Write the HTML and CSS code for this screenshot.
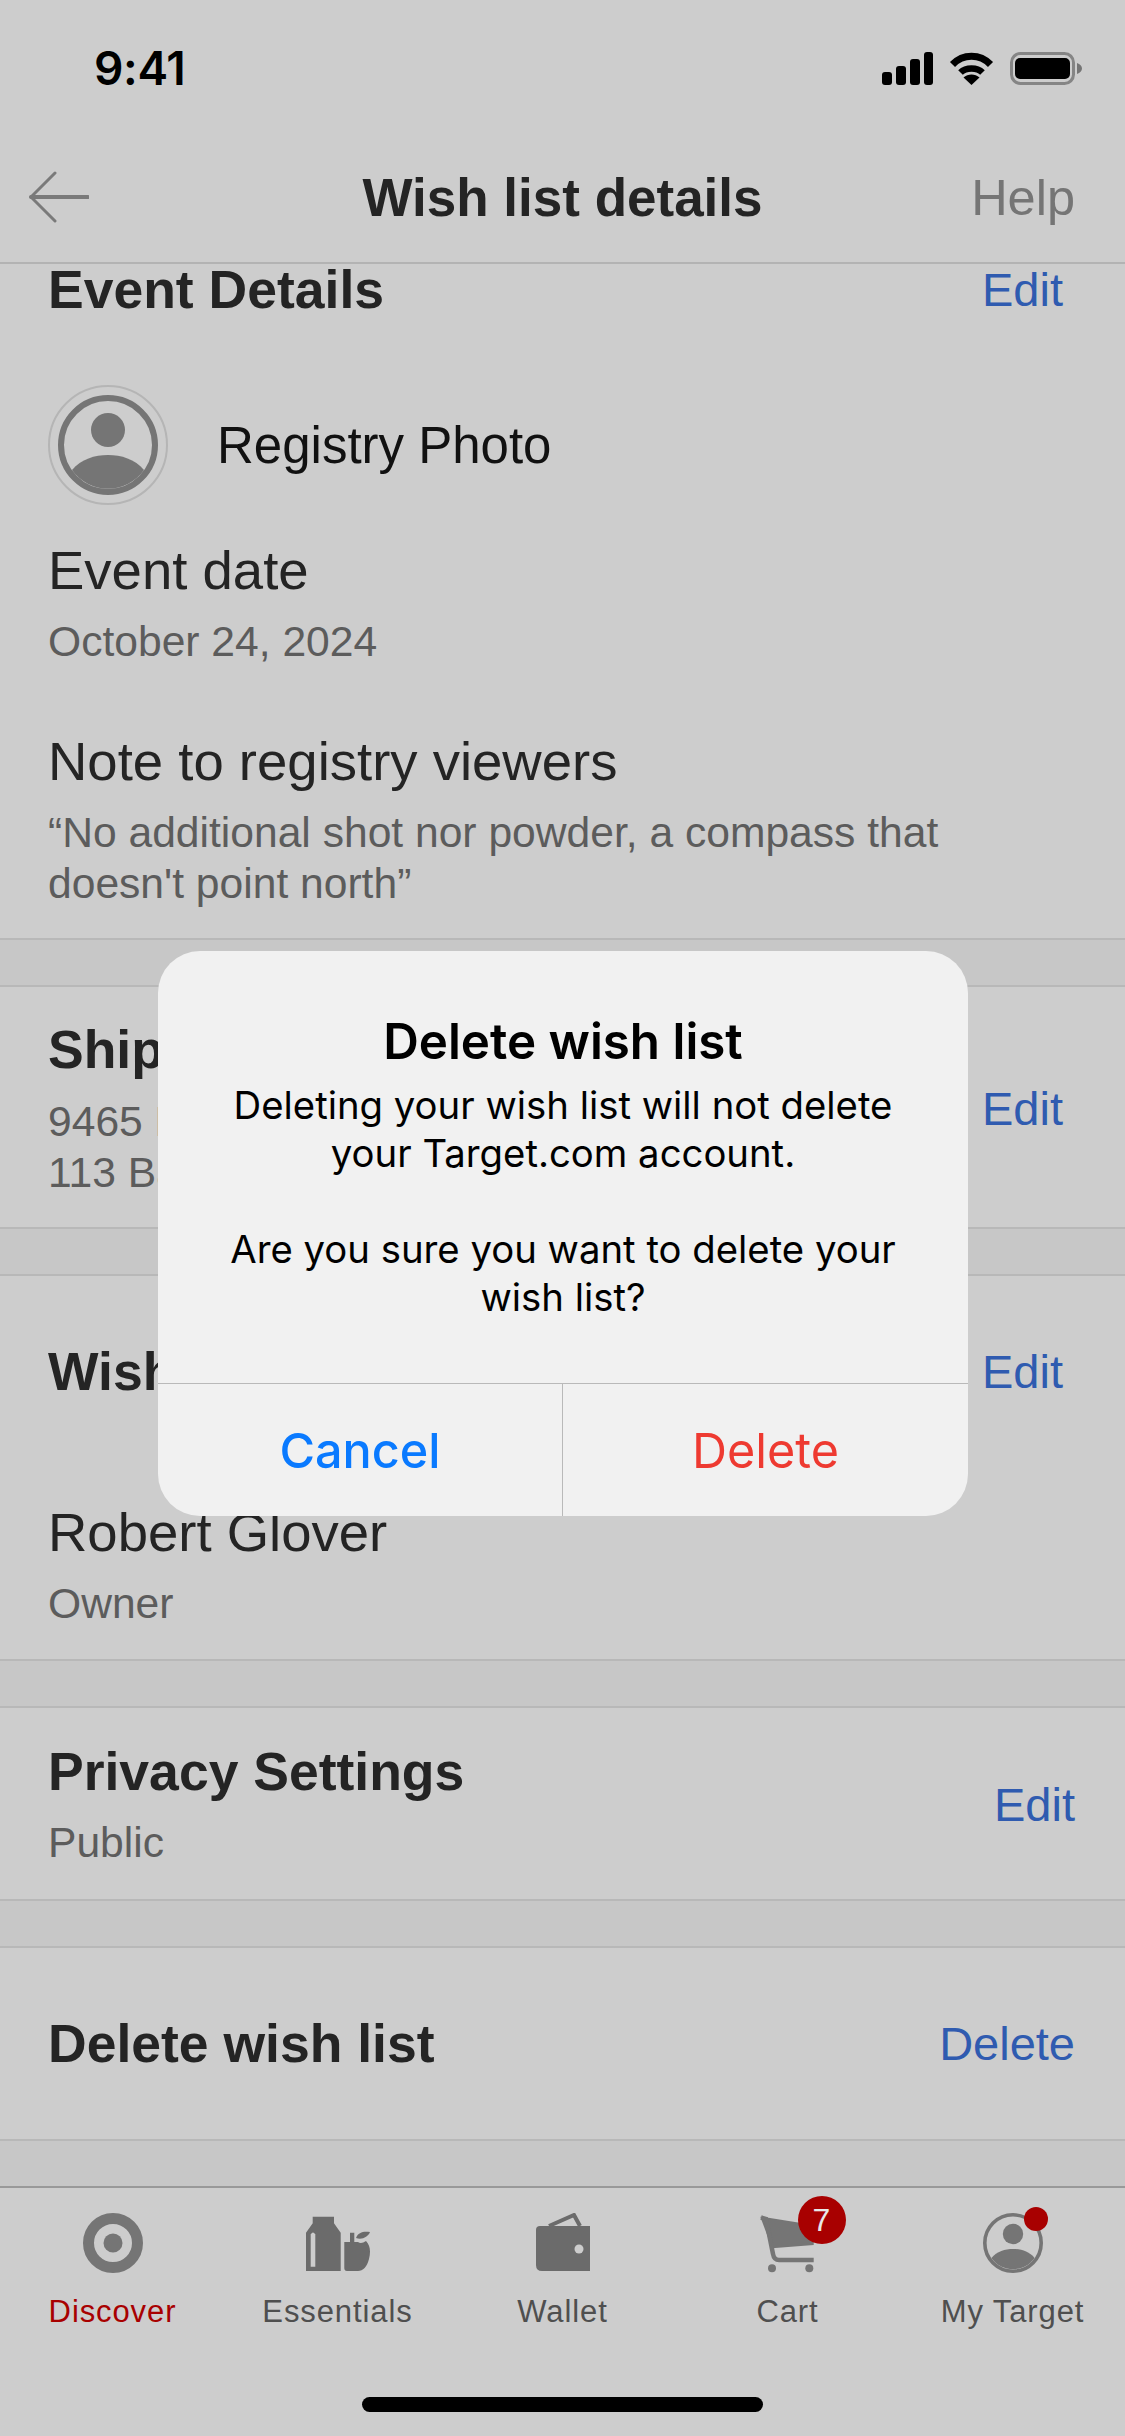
FILE: index.html
```html
<!DOCTYPE html>
<html lang="en">
<head>
  <meta charset="UTF-8">
  <meta name="viewport" content="width=device-width, initial-scale=1.0">
  <title>Wish list details</title>
  <link rel="stylesheet" href="styles.css">
</head>
<body>
  <svg class="defs" width="0" height="0">
    <symbol id="avatar" viewBox="-50 -50 100 100">
      <circle cx="0" cy="0" r="47" fill="none" stroke="#757575" stroke-width="6"/>
      <circle cx="0" cy="-15" r="17" fill="#757575"/>
      <path d="M-36 25C-27 14 -13 10 0 10C13 10 27 14 36 25A44 44 0 0 1 -36 25Z" fill="#757575"/>
    </symbol>
  </svg>

  <div class="screen">
    <div class="status-bar">
      <span class="time">9:41</span>
      <div class="status-icons">
        <svg width="51" height="33" viewBox="0 0 51 33" fill="#000">
          <rect x="0" y="20" width="10" height="13" rx="3"/>
          <rect x="14" y="14" width="10" height="19" rx="3"/>
          <rect x="28" y="7" width="10" height="26" rx="3"/>
          <rect x="42" y="0" width="9" height="33" rx="3"/>
        </svg>
        <svg width="45" height="33" viewBox="0 0 45 33" fill="none" stroke="#000">
          <path d="M3.5 12.5C14 1.5 31 1.5 41.5 12.5" stroke-width="7"/>
          <path d="M11.5 20.5C17 15 28 15 33.5 20.5" stroke-width="6.5"/>
          <path d="M22.5 33L14.5 25.5C19 21.5 26 21.5 30.5 25.5Z" fill="#000" stroke="none"/>
        </svg>
        <svg width="72" height="33" viewBox="0 0 72 33">
          <rect x="1.5" y="1.5" width="62" height="30" rx="9" fill="none" stroke="#858585" stroke-width="3"/>
          <rect x="5" y="6" width="55" height="21" rx="5" fill="#000"/>
          <path d="M67 11C70 12 72 14 72 16.5C72 19 70 21 67 22Z" fill="#757575"/>
        </svg>
      </div>
    </div>

    <div class="nav">
      <svg class="back" width="60" height="52" viewBox="0 0 60 52" fill="none" stroke="#7a7a7a" stroke-linecap="round" stroke-linejoin="round">
        <path d="M59 26H2" stroke-width="4"/>
        <path d="M26 2L2 26L26 50" stroke-width="3"/>
      </svg>
      <div class="nav-title">Wish list details</div>
      <div class="nav-help">Help</div>
    </div>

    <div class="content">
      <section class="section event">
        <div class="row">
          <h2>Event Details</h2>
          <a class="link">Edit</a>
        </div>
        <div class="photo-row">
          <div class="photo">
            <svg width="100" height="100"><use href="#avatar"/></svg>
          </div>
          <span class="photo-label">Registry Photo</span>
        </div>
        <div class="label first">Event date</div>
        <div class="sub">October 24, 2024</div>
        <div class="label note">Note to registry viewers</div>
        <div class="sub">“No additional shot nor powder, a compass that<br>doesn't point north”</div>
      </section>
      <div class="band"></div>

      <section class="section ship">
        <div class="row">
          <div>
            <h2>Shipping address</h2>
            <div class="sub">9465 Hill Street<br>113 Bay Avenue</div>
          </div>
          <a class="link">Edit</a>
        </div>
      </section>
      <div class="band"></div>

      <section class="section owner">
        <div class="row">
          <h2>Wish list owner</h2>
          <a class="link">Edit</a>
        </div>
        <div class="label person">Robert Glover</div>
        <div class="sub">Owner</div>
      </section>
      <div class="band"></div>

      <section class="section privacy">
        <div class="row wide">
          <div>
            <h2>Privacy Settings</h2>
            <div class="sub">Public</div>
          </div>
          <a class="link">Edit</a>
        </div>
      </section>
      <div class="band"></div>

      <section class="section remove">
        <div class="row wide">
          <h2>Delete wish list</h2>
          <a class="link">Delete</a>
        </div>
      </section>
      <div class="band last"></div>
    </div>

    <div class="tabbar">
      <div class="tabs">
        <div class="tab active">
          <div class="tab-icon">
            <svg width="60" height="60" viewBox="0 0 60 60">
              <circle cx="30" cy="30" r="24.5" fill="none" stroke="#757575" stroke-width="11"/>
              <circle cx="30" cy="30" r="9.5" fill="#757575"/>
            </svg>
          </div>
          <span>Discover</span>
        </div>
        <div class="tab">
          <div class="tab-icon">
            <svg width="64" height="60" viewBox="0 0 64 60" fill="#6b6b6b">
              <path d="M6.7 3.7H28V10.3L34.7 19.7V58H0V19.7L6.7 10.3Z"/>
              <path d="M4.7 21.5Q7 17.5 9.3 21.5V53.7H4.7Z" fill="#cdcdcd"/>
              <path d="M38.3 29H44V19.7H48.3V29H52Q55 31.5 60 28C64 32 65 38 63 46C61 54 57 58 52 58H41Q38.3 58 38.3 55Z"/>
              <path d="M50 25C52 19 58 18 64 19C62 24 56 27 50 25Z"/>
            </svg>
          </div>
          <span>Essentials</span>
        </div>
        <div class="tab">
          <div class="tab-icon">
            <svg width="54" height="60" viewBox="0 0 54 60">
              <path d="M0 17Q0 13 4 13H54V58H6Q0 58 0 52Z" fill="#6b6b6b"/>
              <path d="M13 13L38 2L44 13" fill="none" stroke="#6b6b6b" stroke-width="4"/>
              <circle cx="43" cy="36" r="4.5" fill="#cdcdcd"/>
            </svg>
          </div>
          <span>Wallet</span>
        </div>
        <div class="tab">
          <div class="tab-icon">
            <svg width="56" height="60" viewBox="0 0 56 60">
              <path d="M0.3 3.7L5.3 4.3L53.7 12V32L12 35.3Z" fill="#757575"/>
              <path d="M1 4.5L6 6L13 41Q14 47 19 47H53.7" fill="none" stroke="#757575" stroke-width="4.5"/>
              <circle cx="12" cy="55.3" r="4" fill="#757575"/>
              <circle cx="49.3" cy="55.3" r="4" fill="#757575"/>
            </svg>
            <span class="badge">7</span>
          </div>
          <span>Cart</span>
        </div>
        <div class="tab">
          <div class="tab-icon">
            <svg width="60" height="60"><use href="#avatar"/></svg>
            <span class="dot"></span>
          </div>
          <span>My Target</span>
        </div>
      </div>
      <div class="home-bar"></div>
    </div>

    <!-- Confirm dialog over the page -->
    <div class="overlay">
      <div class="dialog">
        <div class="dialog-text">
          <div class="dialog-title">Delete wish list</div>
          <p>Deleting your wish list will not delete<br>your Target.com account.</p>
          <p>Are you sure you want to delete your<br>wish list?</p>
        </div>
        <div class="dialog-actions">
          <button class="cancel">Cancel</button>
          <button class="confirm">Delete</button>
        </div>
      </div>
    </div>
  </div>
</body>
</html>
```

FILE: styles.css
```css
* {
  box-sizing: border-box;
}
html, body {
  margin: 0;
  padding: 0;
}
body {
  font-family: "Liberation Sans", Arial, sans-serif;
  background-color: #cdcdcd;
  color: #242424;
}
.defs {
  display: block;
  height: 0;
}
.screen {
  position: relative;
  width: 1125px;
  height: 2436px;
  display: flex;
  flex-direction: column;
  overflow: hidden;
  background-color: #cdcdcd;
}

/* Status bar */
.status-bar {
  flex: none;
  height: 132px;
  padding: 52px 43px 0 94px;
  display: flex;
  justify-content: space-between;
  align-items: flex-start;
}
.time {
  font-family: Inter, sans-serif;
  font-weight: 600;
  font-size: 46px;
  line-height: 33px;
  letter-spacing: -0.3px;
  color: #000;
}
.status-icons {
  display: flex;
  align-items: center;
  gap: 16px;
}
.status-icons svg {
  display: block;
}

/* Nav */
.nav {
  flex: none;
  height: 132px;
  display: grid;
  grid-template-columns: 1fr auto 1fr;
  align-items: center;
  border-bottom: 2px solid #b3b3b3;
}
.back {
  margin-left: 29px;
}
.nav-title {
  font-weight: bold;
  font-size: 53px;
}
.nav-help {
  justify-self: end;
  margin-right: 50px;
  font-size: 50.5px;
  color: #757575;
}

/* Page content */
.content {
  flex: 1;
  min-height: 0;
  display: flex;
  flex-direction: column;
}
.section {
  padding: 33px 0 29px 48px;
}
.row {
  display: flex;
  justify-content: space-between;
  align-items: center;
  padding-right: 62px;
}
.row.wide {
  padding-right: 50px;
}
h2 {
  margin: 0;
  font-size: 53.5px;
  line-height: 60px;
  font-weight: bold;
}
.link {
  font-size: 47px;
  line-height: 52px;
  color: #2f5bb0;
}
.label {
  margin-top: 66px;
  font-size: 54.5px;
  line-height: 60px;
}
.sub {
  margin-top: 15px;
  font-size: 42.6px;
  line-height: 51px;
  color: #5c5c5c;
}
.band {
  flex: none;
  height: 49px;
  background-color: #c7c7c7;
  border-top: 2px solid #b8b8b8;
  border-bottom: 2px solid #b8b8b8;
}
.band.last {
  flex: 1;
  height: auto;
  border-bottom: none;
}

.event {
  padding-top: 0;
}
.event h2 {
  line-height: 52px;
}
.photo-row {
  margin-top: 69px;
  display: flex;
  align-items: center;
  gap: 49px;
}
.photo {
  width: 120px;
  height: 120px;
  border: 2px solid #b5b5b5;
  border-radius: 50%;
  display: flex;
  align-items: center;
  justify-content: center;
}
.photo-label {
  font-size: 51px;
  color: #111;
}
.label.first {
  margin-top: 36px;
}
.label.note {
  margin-top: 65px;
}
.ship .sub {
  margin-top: 16px;
}
.owner {
  padding-top: 66px;
  padding-bottom: 30px;
}
.label.person {
  margin-top: 101px;
}
.privacy {
  padding-top: 34px;
  padding-bottom: 31px;
}
.remove {
  padding-top: 66px;
  padding-bottom: 65px;
}

/* Tab bar */
.tabbar {
  flex: none;
  height: 250px;
  padding-top: 25px;
  border-top: 2px solid #999;
}
.tabs {
  display: grid;
  grid-template-columns: repeat(5, 1fr);
}
.tab {
  display: flex;
  flex-direction: column;
  align-items: center;
  font-size: 31px;
  line-height: 40px;
  letter-spacing: 0.9px;
  color: #4f4f4f;
}
.tab.active {
  color: #a80000;
}
.tab-icon {
  position: relative;
  height: 64px;
  margin-bottom: 15px;
}
.tab-icon svg {
  display: block;
}
.badge {
  position: absolute;
  left: 38px;
  top: -17px;
  width: 48px;
  height: 48px;
  border-radius: 50%;
  background-color: #a80000;
  color: #e8e8e8;
  font-size: 32px;
  line-height: 48px;
  text-align: center;
  letter-spacing: 0;
}
.dot {
  position: absolute;
  left: 41px;
  top: -6px;
  width: 24px;
  height: 24px;
  border-radius: 50%;
  background-color: #a80000;
}
.home-bar {
  width: 401px;
  height: 15px;
  margin: 65px auto 0;
  border-radius: 8px;
  background-color: #000;
}

/* Dialog */
.overlay {
  position: absolute;
  inset: 0;
  padding: 951px 0 0 1px;
  display: flex;
  justify-content: center;
  align-items: flex-start;
}
.dialog {
  width: 810px;
  height: 565px;
  display: flex;
  flex-direction: column;
  overflow: hidden;
  border-radius: 42px;
  background-color: #f1f1f1;
  font-family: Inter, sans-serif;
  color: #000;
}
.dialog-text {
  flex: 1;
  padding-top: 60px;
  text-align: center;
}
.dialog-title {
  font-weight: 600;
  font-size: 49.3px;
  line-height: 60px;
  margin-bottom: 10px;
}
.dialog p {
  margin: 0 0 48px;
  font-size: 38.3px;
  line-height: 48px;
}
.dialog-actions {
  flex: none;
  height: 133px;
  display: grid;
  grid-template-columns: 1fr 1fr;
  border-top: 1.5px solid #b9b9b9;
}
.dialog-actions button {
  border: none;
  padding: 0;
  background: none;
  font-family: Inter, sans-serif;
  font-size: 48.5px;
}
.dialog-actions .cancel {
  color: #0a7aff;
  font-weight: 500;
  border-right: 1.5px solid #b9b9b9;
}
.dialog-actions .confirm {
  color: #ee3a31;
}
```
